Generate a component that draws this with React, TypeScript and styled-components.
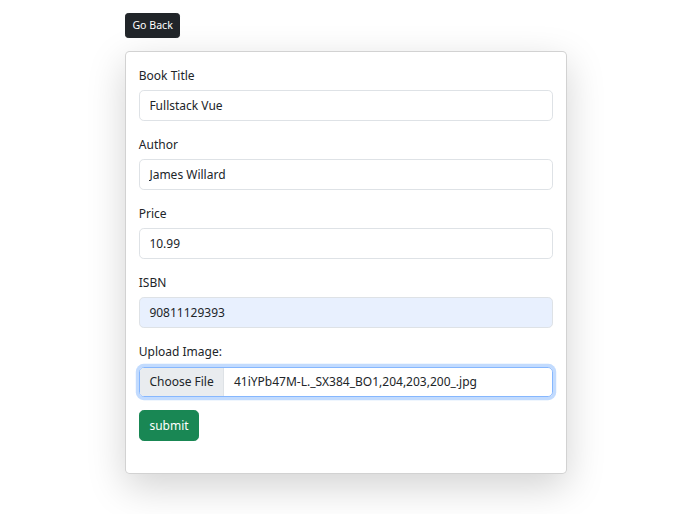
import React from "react";
import styled, { createGlobalStyle } from "styled-components";

const Global = createGlobalStyle`
  body {
    margin: 0;
    background: #fff;
    font-family: "Noto Sans", "Open Sans", Arial, sans-serif;
    font-size: 12px;
    color: #212529;
  }
  * { box-sizing: border-box; }
`;

const Page = styled.div`
  padding: 13px 0 40px 125px;
  width: 567px;
`;

const BackButton = styled.button`
  display: inline-block;
  font-family: inherit;
  font-size: 10.6px;
  line-height: 16.8px;
  padding: 3px 6.4px;
  color: #fff;
  background: #212529;
  border: 1px solid #212529;
  border-radius: 3.2px;
  margin-bottom: 13px;
`;

const Card = styled.div`
  width: 442px;
  background: #fff;
  border: 1px solid rgba(0, 0, 0, 0.175);
  border-radius: 4.8px;
  box-shadow: 0 12.8px 38.4px rgba(0, 0, 0, 0.175);
  padding: 12.8px 12.8px 32px;
`;

const Group = styled.div`
  margin-bottom: 12.85px;
`;

const Label = styled.label`
  display: block;
  line-height: 19.2px;
  padding-top: 1px;
  margin-bottom: 5.6px;
`;

const Input = styled.input<{ $autofill?: boolean }>`
  display: block;
  width: 100%;
  height: 30.4px;
  padding: 4.8px 9.6px;
  font-family: inherit;
  font-size: 12px;
  line-height: 19.2px;
  color: #212529;
  background: ${(p) => (p.$autofill ? "#e8f0fe" : "#fff")};
  border: 1px solid #dee2e6;
  border-radius: 4.8px;
  outline: none;
`;

const FileField = styled.div`
  display: flex;
  align-items: stretch;
  height: 30.4px;
  border: 1px solid #86b7fe;
  border-radius: 4.8px;
  box-shadow: 0 0 0 3.2px rgba(13, 110, 253, 0.25);
  overflow: hidden;
  line-height: 19.2px;
`;

const FileButton = styled.span`
  display: flex;
  align-items: center;
  padding: 0 9.6px;
  background: #e9ecef;
  border-right: 1px solid #dee2e6;
  color: #212529;
`;

const FileName = styled.span`
  display: flex;
  align-items: center;
  padding: 0 9.6px;
`;

const Submit = styled.button`
  font-family: inherit;
  font-size: 12px;
  line-height: 19.2px;
  padding: 4.8px 9.6px;
  color: #fff;
  background: #198754;
  border: 1px solid #198754;
  border-radius: 4.8px;
`;

const fields = [
  { label: "Book Title", value: "Fullstack Vue" },
  { label: "Author", value: "James Willard" },
  { label: "Price", value: "10.99" },
  { label: "ISBN", value: "90811129393", autofill: true },
];

export default function App() {
  return (
    <>
      <Global />
      <Page>
        <BackButton>Go Back</BackButton>
        <Card>
          <form onSubmit={(e) => e.preventDefault()}>
            {fields.map((f) => (
              <Group key={f.label}>
                <Label>{f.label}</Label>
                <Input defaultValue={f.value} $autofill={f.autofill} />
              </Group>
            ))}
            <Group>
              <Label>Upload Image:</Label>
              <FileField>
                <FileButton>Choose File</FileButton>
                <FileName>41iYPb47M-L._SX384_BO1,204,203,200_.jpg</FileName>
              </FileField>
            </Group>
            <Submit type="submit">submit</Submit>
          </form>
        </Card>
      </Page>
    </>
  );
}
